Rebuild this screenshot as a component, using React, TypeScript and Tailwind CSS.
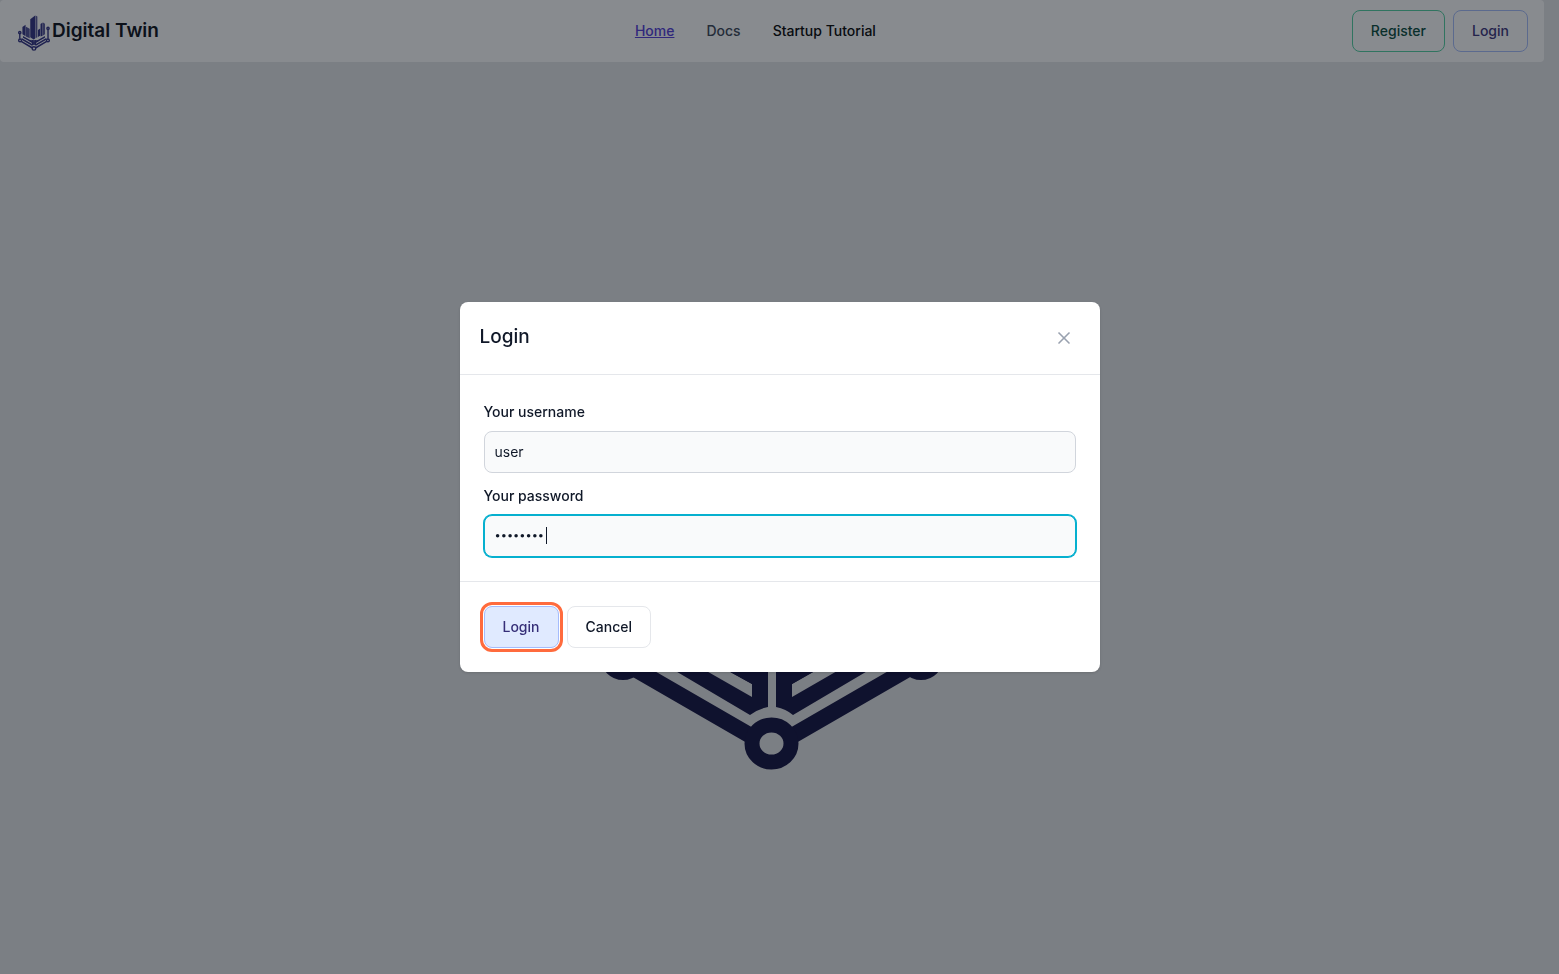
import { useState } from "react";
import type { FormEvent } from "react";
import { X } from "lucide-react";

function LogoMark({ className, viewBox }: { className: string; viewBox: string }) {
  return (
    <svg className={className} viewBox={viewBox} preserveAspectRatio="xMidYMid meet" aria-hidden="true">
      <g fill="currentColor">
        {/* towers */}
        <path d="M132 46 L184 6 L184 252 L168 262 L132 240 Z" />
        <path d="M188 6 L208 18 L208 238 L188 250 Z" opacity="0.8" />
        <path d="M48 128 L82 106 L82 228 L48 208 Z" />
        <path d="M86 126 L116 142 L126 154 L126 250 L86 230 Z" opacity="0.85" />
        <path d="M214 160 L238 146 L238 222 L214 236 Z" />
        <path d="M242 96 L264 80 L264 222 L242 232 Z" />
        <path d="M268 80 L290 94 L290 206 L268 220 Z" opacity="0.8" />
        {/* base plates */}
        <path d="M40 265 L40 248 L152 312 V299 L54 244 V226 L168 290 V322 Q158 324 150 330 Z" />
        <path d="M152 268 H168 V322 H152 Z" />
        <path d="M303 265 L303 248 L192 312 V299 L289 244 V226 L176 290 V322 Q186 324 193 330 Z" />
        <path d="M176 268 H192 V318 H176 Z" />
        <path d="M130 287 L110 270 H168 V308 H152 V299 Z M213 287 L233 270 H176 V308 H192 V299 Z" />
      </g>
      <g fill="none" stroke="currentColor" strokeWidth="15">
        <path d="M35 284 L151 351 M308 284 L192 351" strokeWidth="16" />
        <path d="M20 204 V256 M322 158 V256" />
        <ellipse cx="171.5" cy="358.5" rx="19.5" ry="18.5" />
        <circle cx="23" cy="272.5" r="15" />
        <circle cx="321" cy="272.5" r="15" />
        <circle cx="20" cy="190" r="12" />
        <circle cx="322" cy="144" r="12" />
      </g>
    </svg>
  );
}

const buttonBase = "h-[42px] rounded-lg border px-[18px] text-sm font-medium";
const inputBase =
  "block h-[42px] w-full rounded-lg border bg-gray-50 px-2.5 pb-0.5 text-gray-900 outline-none";
const labelBase = "mb-1.5 block text-sm/[26px] font-medium";

export default function App() {
  const [username, setUsername] = useState("user");
  const [password, setPassword] = useState("password");
  const submit = (event: FormEvent) => event.preventDefault();

  return (
    <div className="min-h-screen bg-[#e5e6e8] font-['Inter',sans-serif] text-gray-900 antialiased">
      <div className="flex min-h-screen flex-col pr-[15px]">
        <header className="flex items-center justify-between rounded bg-white px-4 py-2.5">
          <a href="#" className="flex items-center">
            <LogoMark className="h-10 w-9 text-[#2c2c80]" viewBox="-20 -42 384 428" />
            <span className="text-[19px]/[30px] font-semibold text-[#060a14]">Digital Twin</span>
          </a>
          <nav className="flex gap-8 text-sm font-medium">
            <a href="#home" className="text-[#5038d8] underline">Home</a>
            <a href="#docs" className="text-gray-700">Docs</a>
            <a href="#tutorial" className="text-black">Startup Tutorial</a>
          </nav>
          <div className="flex gap-2">
            <button type="button" className={`${buttonBase} border-[#4fd0a0] text-[#014737]`}>Register</button>
            <button type="button" className={`${buttonBase} border-[#a4bcfd] text-[#362f78]`}>Login</button>
          </div>
        </header>
        <main className="flex flex-1 items-center justify-center">
          <LogoMark className="size-[512px] text-[#0d0c3c]" viewBox="-84 -123 512 512" />
        </main>
      </div>

      <div className="fixed inset-0 flex items-center justify-center bg-[#111820]/50">
        <form
          onSubmit={submit}
          role="dialog"
          aria-modal="true"
          aria-labelledby="login-title"
          className="w-full max-w-[640px] rounded-lg bg-white shadow"
        >
          <div className="flex items-start justify-between border-b border-gray-200 p-5">
            <h2 id="login-title" className="text-[19px]/[30px] font-medium">Login</h2>
            <button type="button" aria-label="Close" className="p-1.5 text-gray-400">
              <X className="size-5" strokeWidth={2} />
            </button>
          </div>
          <div className="flex flex-col gap-2.5 p-6">
            <div>
              <label htmlFor="username" className={labelBase}>Your username</label>
              <input
                id="username"
                type="text"
                value={username}
                onChange={(event) => setUsername(event.target.value)}
                className={`${inputBase} border-gray-300 text-sm`}
              />
            </div>
            <div>
              <label htmlFor="password" className={labelBase}>Your password</label>
              <div className="relative">
                <input
                  id="password"
                  type="password"
                  autoFocus
                  value={password}
                  onChange={(event) => setPassword(event.target.value)}
                  className={`${inputBase} border-[#06b0cf] text-[11px] caret-transparent ring-1 ring-[#06b0cf]`}
                />
                <span aria-hidden="true" className="absolute top-3 left-[62px] h-[17px] w-px bg-gray-900" />
              </div>
            </div>
          </div>
          <div className="flex gap-2 border-t border-gray-200 p-6">
            <button
              type="submit"
              className={`${buttonBase} border-[#a4bcfd] bg-[#e0eaff] text-[#362f78] outline-[3px] outline-offset-1 outline-[#ff6b3d]`}
            >
              Login
            </button>
            <button type="button" className={`${buttonBase} border-gray-200 bg-white`}>Cancel</button>
          </div>
        </form>
      </div>
    </div>
  );
}
